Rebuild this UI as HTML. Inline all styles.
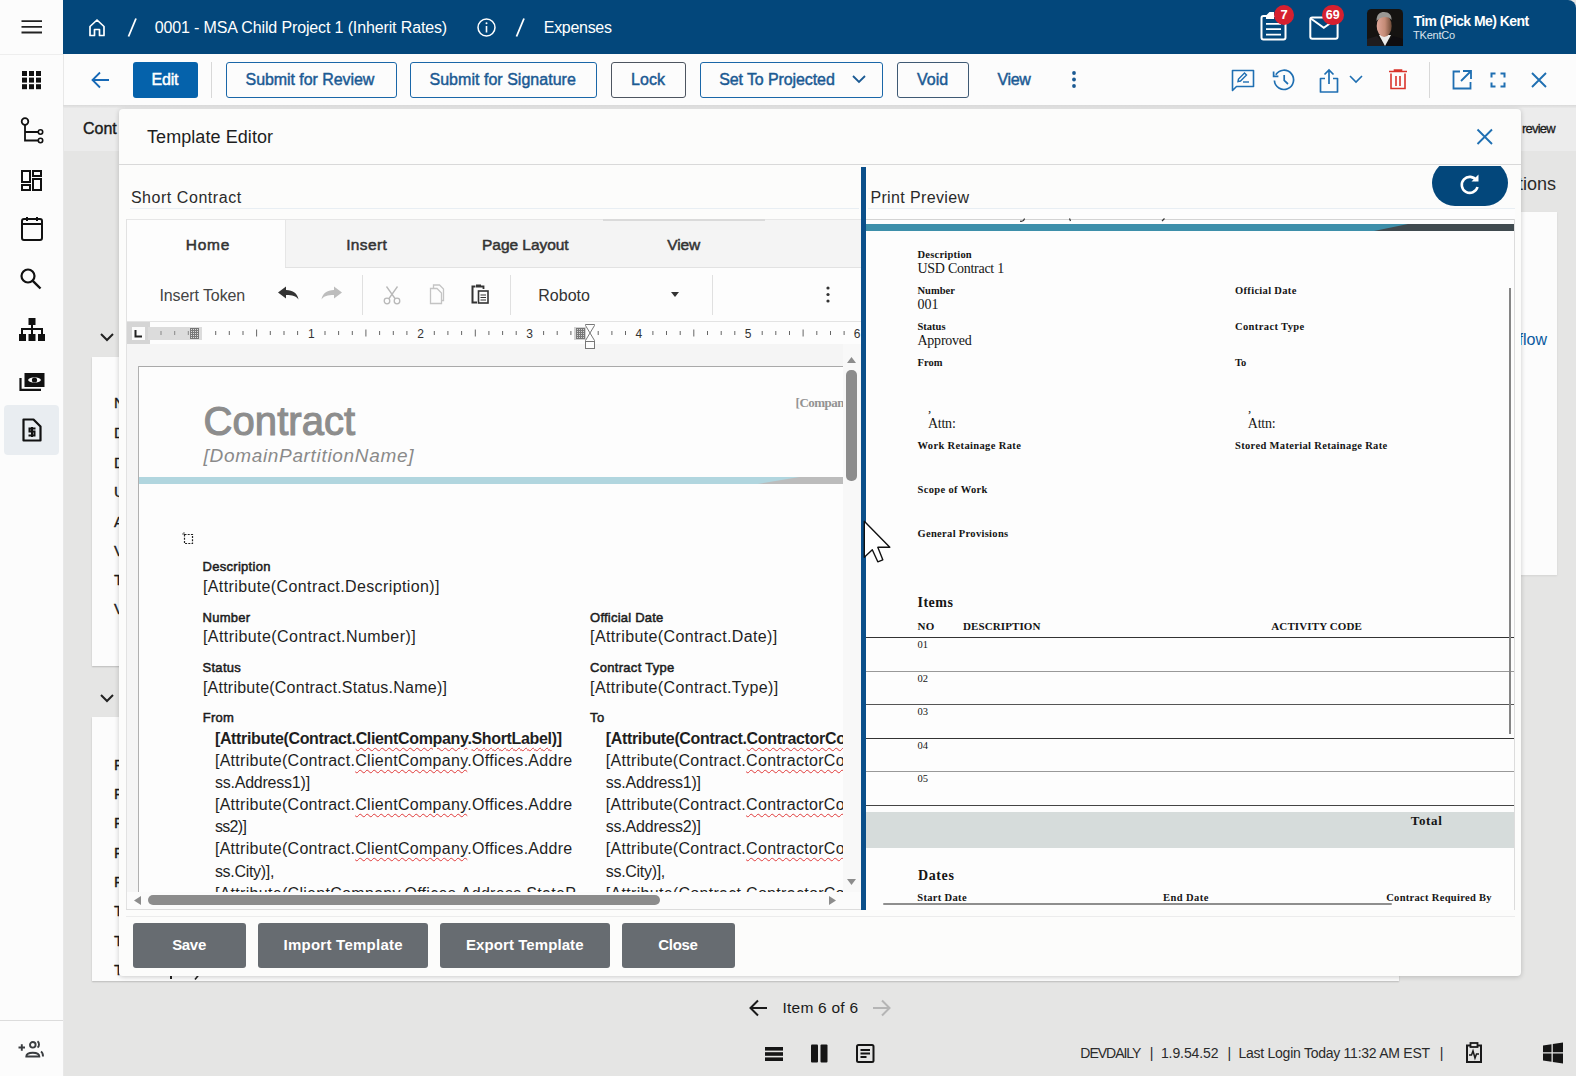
<!DOCTYPE html>
<html><head><meta charset="utf-8"><style>
*{margin:0;padding:0}
html,body{width:1576px;height:1076px;overflow:hidden;background:#e5e5e4;font-family:"Liberation Sans", sans-serif;}
.b{position:absolute}
.i{position:absolute;overflow:visible}
.t{position:absolute;white-space:pre}
.badge{position:absolute;background:#d6202f;color:#fff;border-radius:11px;font:700 13px/20px "Liberation Sans",sans-serif;text-align:center}
.sq{text-decoration:underline wavy #e03a3a;text-decoration-thickness:1px;text-underline-offset:3px}
</style></head><body>
<div class="b" style="left:0px;top:0px;width:63px;height:1076px;background:#fcfcfc;"></div>
<div class="b" style="left:63px;top:0px;width:1px;height:1076px;background:#e8e8e8;"></div>
<div class="b" style="left:0px;top:54px;width:63px;height:1px;background:#eeeeee;"></div>
<div class="b" style="left:0px;top:1020px;width:63px;height:1px;background:#dcdcdc;"></div>
<svg class="i" style="left:19px;top:16px;" width="26" height="20" viewBox="0 0 26 20"><path d="M2.5 5.2H23M2.5 10.8H23M2.5 16.5H23" stroke="#222" stroke-width="1.8"/></svg>
<svg class="i" style="left:0px;top:0px;" width="63" height="100" viewBox="0 0 63 100"><rect x="22" y="71.0" width="5" height="5" fill="#111"/><rect x="22" y="77.6" width="5" height="5" fill="#111"/><rect x="22" y="84.2" width="5" height="5" fill="#111"/><rect x="29" y="71.0" width="5" height="5" fill="#111"/><rect x="29" y="77.6" width="5" height="5" fill="#111"/><rect x="29" y="84.2" width="5" height="5" fill="#111"/><rect x="36" y="71.0" width="5" height="5" fill="#111"/><rect x="36" y="77.6" width="5" height="5" fill="#111"/><rect x="36" y="84.2" width="5" height="5" fill="#111"/></svg>
<svg class="i" style="left:18px;top:116px;" width="28" height="30" viewBox="0 0 28 30"><circle cx="7" cy="5.5" r="3.3" fill="none" stroke="#111" stroke-width="1.8"/><path d="M7 9V24.5H20M7 16H20" fill="none" stroke="#111" stroke-width="1.8"/><circle cx="22.5" cy="16" r="2.2" fill="none" stroke="#111" stroke-width="1.6"/><circle cx="22.5" cy="24.5" r="2.2" fill="none" stroke="#111" stroke-width="1.6"/></svg>
<svg class="i" style="left:18px;top:167px;" width="28" height="26" viewBox="0 0 28 26"><rect x="4" y="4" width="8" height="11" fill="none" stroke="#111" stroke-width="2"/><rect x="15" y="4" width="8" height="5" fill="none" stroke="#111" stroke-width="2"/><rect x="4" y="18" width="8" height="5" fill="none" stroke="#111" stroke-width="2"/><rect x="15" y="12" width="8" height="11" fill="none" stroke="#111" stroke-width="2"/></svg>
<svg class="i" style="left:18px;top:214px;" width="28" height="30" viewBox="0 0 28 30"><rect x="4" y="5" width="20" height="21" rx="2" fill="none" stroke="#111" stroke-width="2"/><path d="M4 10H24M9 3V7M19 3V7" stroke="#111" stroke-width="2"/></svg>
<svg class="i" style="left:18px;top:266px;" width="28" height="28" viewBox="0 0 28 28"><circle cx="10" cy="10" r="6.5" fill="none" stroke="#111" stroke-width="2.2"/><path d="M14.8 14.8L22.5 22.5" stroke="#111" stroke-width="2.4"/></svg>
<svg class="i" style="left:16px;top:316px;" width="32" height="28" viewBox="0 0 32 28"><rect x="12.5" y="2" width="7" height="7" fill="#111"/><path d="M16 9V13M6 18V13H26V18M16 13V18" fill="none" stroke="#111" stroke-width="2"/><rect x="3" y="18" width="7" height="7" fill="#111"/><rect x="12.5" y="18" width="7" height="7" fill="#111"/><rect x="22" y="18" width="7" height="7" fill="#111"/></svg>
<svg class="i" style="left:16px;top:370px;" width="32" height="24" viewBox="0 0 32 24"><rect x="8.5" y="3" width="20" height="14" fill="#111"/><path d="M12 10C13.5 6.3 23.5 6.3 25 10C23.5 13.7 13.5 13.7 12 10Z" fill="#fcfcfc"/><circle cx="18.5" cy="10" r="2.6" fill="#111"/><path d="M4.5 8V19.8H25" fill="none" stroke="#111" stroke-width="2.2"/></svg>
<div class="b" style="left:4px;top:405px;width:55px;height:50px;background:#e9edf1;border-radius:4px;"></div>
<svg class="i" style="left:18px;top:416px;" width="28" height="28" viewBox="0 0 28 28"><path d="M5.5 3.5H15.5L22.5 10.5V24.5H5.5Z" fill="none" stroke="#111" stroke-width="2.2" stroke-linejoin="round"/><path d="M17.5 12.5H11.5V15.5H16.5V19.5H10.5M14 11V21" fill="none" stroke="#111" stroke-width="2"/></svg>
<svg class="i" style="left:16px;top:1038px;" width="32" height="22" viewBox="0 0 32 22"><path d="M2.5 9.5H9M5.8 6.2V12.8" stroke="#3a3d40" stroke-width="1.9"/><circle cx="16.8" cy="6.8" r="2.8" fill="none" stroke="#3a3d40" stroke-width="1.9"/><path d="M10.3 18.5C10.3 13.5 23.3 13.5 23.3 18.5Z" fill="none" stroke="#3a3d40" stroke-width="1.9"/><path d="M21.5 3.2C23.5 4.5 23.5 8.3 21.5 9.5M25 13.5C26.5 14.5 27 16.5 27 18.5" fill="none" stroke="#3a3d40" stroke-width="1.9"/></svg>
<div class="b" style="left:63px;top:0px;width:1513px;height:54px;background:#03477b;border-top-right-radius:8px;"></div>
<svg class="i" style="left:87px;top:17px;" width="20" height="21" viewBox="0 0 20 21"><path d="M3 9.5L10 3L17 9.5V18.5H12.5V12.5H7.5V18.5H3Z" fill="none" stroke="#fff" stroke-width="1.7" stroke-linejoin="round"/></svg>
<svg class="i" style="left:124px;top:16px;" width="16" height="23" viewBox="0 0 16 23"><path d="M12 2.5L4.5 20.5" stroke="#fff" stroke-width="1.8"/></svg>
<div class="t" id="h_bc" style="left:154.70px;top:19.98px;font-size:16px;line-height:16px;color:#fff;letter-spacing:-0.132px;">0001 - MSA Child Project 1 (Inherit Rates)</div>
<svg class="i" style="left:476px;top:17px;" width="21" height="21" viewBox="0 0 21 21"><circle cx="10.5" cy="10.5" r="8.5" fill="none" stroke="#fff" stroke-width="1.5"/><path d="M10.5 9V15.5" stroke="#fff" stroke-width="1.6"/><circle cx="10.5" cy="6.3" r="1" fill="#fff"/></svg>
<svg class="i" style="left:512px;top:16px;" width="16" height="23" viewBox="0 0 16 23"><path d="M12 2.5L4.5 20.5" stroke="#fff" stroke-width="1.8"/></svg>
<div class="t" id="h_exp" style="left:543.80px;top:19.98px;font-size:16px;line-height:16px;color:#fff;letter-spacing:-0.300px;">Expenses</div>
<svg class="i" style="left:1257px;top:8px;" width="34" height="36" viewBox="0 0 34 36"><rect x="4.5" y="8" width="24" height="23.5" rx="2" fill="none" stroke="#fff" stroke-width="2"/><path d="M9 7.5L12.5 4H17V11H9Z" fill="#fff"/><path d="M9 15.8H24M9 21.2H24M9 26.6H24" stroke="#fff" stroke-width="1.7"/></svg>
<div class="badge" style="left:1274px;top:5px;width:20px;height:20px;line-height:20px;">7</div>
<svg class="i" style="left:1306px;top:14px;" width="36" height="28" viewBox="0 0 36 28"><rect x="4.3" y="3.5" width="27.3" height="21.2" rx="2" fill="none" stroke="#fff" stroke-width="2"/><path d="M4.8 4.5L17.8 13.8L30.8 4.5" fill="none" stroke="#fff" stroke-width="2"/></svg>
<div class="badge" style="left:1321.5px;top:4.6px;width:22.5px;height:20px;line-height:20px;font-size:12.5px;">69</div>
<svg class="i" style="left:1367px;top:9px;" width="36" height="37" viewBox="0 0 36 37"><defs><linearGradient id="fg" x1="0" x2="1"><stop offset="0" stop-color="#e0a89a"/><stop offset="0.55" stop-color="#c48b76"/><stop offset="1" stop-color="#6e4a36"/></linearGradient></defs><rect x="0" y="0" width="36" height="37" rx="4.5" fill="#151311"/><path d="M0 30L10 27L18 37H0Z" fill="#1f1c1e"/><path d="M36 30L26 27L18 37H36Z" fill="#0f0d10"/><path d="M12 26L18 37L24 26Z" fill="#ecebea"/><ellipse cx="17.2" cy="17" rx="7.5" ry="11" fill="url(#fg)"/><path d="M9.5 12C9.5 5 13 3 17 3C22 3 25 6 24.5 11C22 7 14 7 9.5 12Z" fill="#9a9894"/></svg>
<div class="t" id="h_name" style="left:1413.40px;top:13.57px;font-size:14px;line-height:14px;color:#fff;font-weight:700;letter-spacing:-0.535px;">Tim (Pick Me) Kent</div>
<div class="t" id="h_co" style="left:1413.00px;top:29.60px;font-size:11px;line-height:11px;color:#d9e3ec;letter-spacing:-0.200px;">TKentCo</div>
<div class="b" style="left:64px;top:54px;width:1512px;height:51px;background:#fcfcfc;"></div>
<div class="b" style="left:63px;top:105px;width:1513px;height:3px;background:linear-gradient(#d9d9d9,#e9e9e9);"></div>
<svg class="i" style="left:88px;top:67px;" width="26" height="26" viewBox="0 0 26 26"><path d="M21 13H5M12 5.5L4.5 13L12 20.5" fill="none" stroke="#1769b6" stroke-width="1.8"/></svg>
<div class="b" style="left:133px;top:62px;width:65px;height:36px;background:#0562ab;border-radius:3px;"></div>
<div class="t" id="tb_edit" style="left:151.40px;top:71.88px;font-size:16px;line-height:16px;color:#fff;letter-spacing:-0.133px;-webkit-text-stroke:0.45px #fff;">Edit</div>
<div class="b" style="left:211px;top:62px;width:1px;height:36px;background:#d8d8d8;"></div>
<div class="b" style="left:226px;top:62px;width:169px;height:34px;border:1px solid #1a67a8;border-radius:3px;background:#fcfcfc;"></div>
<div class="t" id="tb_sfr" style="left:245.60px;top:71.88px;font-size:16px;line-height:16px;color:#1b5a93;letter-spacing:-0.069px;-webkit-text-stroke:0.45px #1b5a93;">Submit for Review</div>
<div class="b" style="left:410px;top:62px;width:185px;height:34px;border:1px solid #1a67a8;border-radius:3px;background:#fcfcfc;"></div>
<div class="t" id="tb_sfs" style="left:429.50px;top:71.88px;font-size:16px;line-height:16px;color:#1b5a93;letter-spacing:0.026px;-webkit-text-stroke:0.45px #1b5a93;">Submit for Signature</div>
<div class="b" style="left:611px;top:62px;width:73px;height:34px;border:1px solid #4d5560;border-radius:3px;background:#fcfcfc;"></div>
<div class="t" id="tb_lock" style="left:631.00px;top:71.88px;font-size:16px;line-height:16px;color:#1b5a93;letter-spacing:0.067px;-webkit-text-stroke:0.45px #1b5a93;">Lock</div>
<div class="b" style="left:700px;top:62px;width:181px;height:34px;border:1px solid #1a67a8;border-radius:3px;background:#fcfcfc;"></div>
<div class="t" id="tb_stp" style="left:719.20px;top:71.88px;font-size:16px;line-height:16px;color:#1b5a93;letter-spacing:-0.100px;-webkit-text-stroke:0.45px #1b5a93;">Set To Projected</div>
<svg class="i" style="left:850px;top:72px;" width="18" height="14" viewBox="0 0 18 14"><path d="M3 4L9 10L15 4" fill="none" stroke="#1b5a93" stroke-width="1.8"/></svg>
<div class="b" style="left:897px;top:62px;width:70px;height:34px;border:1px solid #3f5a74;border-radius:3px;background:#fcfcfc;"></div>
<div class="t" id="tb_void" style="left:917.00px;top:71.88px;font-size:16px;line-height:16px;color:#1b5a93;-webkit-text-stroke:0.45px #1b5a93;">Void</div>
<div class="t" id="tb_view" style="left:997.60px;top:71.88px;font-size:16px;line-height:16px;color:#1b5a93;letter-spacing:-0.400px;-webkit-text-stroke:0.45px #1b5a93;">View</div>
<svg class="i" style="left:1068px;top:70px;" width="12" height="20" viewBox="0 0 12 20"><circle cx="6" cy="3" r="1.9" fill="#1b5a93"/><circle cx="6" cy="9.5" r="1.9" fill="#1b5a93"/><circle cx="6" cy="16" r="1.9" fill="#1b5a93"/></svg>
<svg class="i" style="left:1229px;top:67px;" width="28" height="26" viewBox="0 0 28 26"><path d="M3.5 3.5H24.5V19.5H7.5L3.5 23.5Z" fill="none" stroke="#1f6fb2" stroke-width="1.6" stroke-linejoin="round"/><path d="M9 14.5L9.5 12L15.5 6L17.5 8L11.5 14Z" fill="none" stroke="#1f6fb2" stroke-width="1.4"/><path d="M14 15H20" stroke="#1f6fb2" stroke-width="1.4"/></svg>
<svg class="i" style="left:1270px;top:66px;" width="28" height="28" viewBox="0 0 28 28"><path d="M5.8 8.8A9.6 9.6 0 1 1 4.4 14.5" fill="none" stroke="#1f6fb2" stroke-width="1.7"/><path d="M3.6 5.5V10.3H8.4" fill="none" stroke="#1f6fb2" stroke-width="1.7"/><path d="M14.2 9V14.5L18 18" fill="none" stroke="#1f6fb2" stroke-width="1.7"/></svg>
<svg class="i" style="left:1316px;top:66px;" width="26" height="30" viewBox="0 0 26 30"><path d="M9 12.5H4.5V26H21.5V12.5H17" fill="none" stroke="#1f6fb2" stroke-width="1.7" stroke-linejoin="round"/><path d="M13 18V4.5M8.5 8.5L13 4L17.5 8.5" fill="none" stroke="#1f6fb2" stroke-width="1.7"/></svg>
<svg class="i" style="left:1347px;top:72px;" width="18" height="14" viewBox="0 0 18 14"><path d="M3 4L9 10L15 4" fill="none" stroke="#1f6fb2" stroke-width="1.6"/></svg>
<svg class="i" style="left:1386px;top:67px;" width="24" height="26" viewBox="0 0 24 26"><path d="M3 4.5H21M8.5 4.5V3H15.5V4.5M5 6.5V21.5H19V6.5" fill="none" stroke="#d9342b" stroke-width="1.6"/><path d="M10 9V19M14 9V19" stroke="#d9342b" stroke-width="1.6"/></svg>
<div class="b" style="left:1429px;top:62px;width:1px;height:36px;background:#d8d8d8;"></div>
<svg class="i" style="left:1449px;top:67px;" width="26" height="26" viewBox="0 0 26 26"><path d="M11 4.5H4.5V21.5H21.5V15" fill="none" stroke="#1f6fb2" stroke-width="1.8"/><path d="M14 4H22V12M22 4L12 14" fill="none" stroke="#1f6fb2" stroke-width="1.8"/></svg>
<svg class="i" style="left:1488px;top:70px;" width="20" height="20" viewBox="0 0 20 20"><path d="M3.5 7.5V3.5H7.5M12.5 3.5H16.5V7.5M16.5 12.5V16.5H12.5M7.5 16.5H3.5V12.5" fill="none" stroke="#1f6fb2" stroke-width="2"/></svg>
<svg class="i" style="left:1528px;top:69px;" width="22" height="22" viewBox="0 0 22 22"><path d="M4 4L18 18M18 4L4 18" stroke="#1f6fb2" stroke-width="1.9"/></svg>
<div class="b" style="left:64px;top:108px;width:1512px;height:43px;background:#ececec;"></div>
<div class="t" id="bg_cont" style="left:83.00px;top:121.38px;font-size:16px;line-height:16px;color:#1a1a1a;-webkit-text-stroke:0.4px #1a1a1a;">Cont</div>
<div class="t" id="bg_review" style="left:1522.00px;top:122.11px;font-size:13px;line-height:13px;color:#1a1a1a;letter-spacing:-0.800px;-webkit-text-stroke:0.3px #1a1a1a;">review</div>
<div class="t" id="bg_tions" style="left:1556.00px;top:175.19px;font-size:18px;line-height:18px;color:#2a2a2a;transform:translateX(-100%);">Actions</div>
<div class="b" style="left:1500px;top:212px;width:57px;height:363px;background:#fcfcfc;box-shadow:0 1px 2px rgba(0,0,0,0.08);"></div>
<div class="t" id="bg_flow" style="left:1547.00px;top:331.68px;font-size:16px;line-height:16px;color:#0b5aa0;transform:translateX(-100%);">Workflow</div>
<svg class="i" style="left:98px;top:330px;" width="18" height="14" viewBox="0 0 18 14"><path d="M3 4L9 10L15 4" fill="none" stroke="#222" stroke-width="2"/></svg>
<svg class="i" style="left:98px;top:691px;" width="18" height="14" viewBox="0 0 18 14"><path d="M3 4L9 10L15 4" fill="none" stroke="#222" stroke-width="2"/></svg>
<div class="b" style="left:92px;top:357px;width:1307px;height:309px;background:#fcfcfc;box-shadow:0 1px 1.5px rgba(0,0,0,0.18);"></div>
<div class="b" style="left:92px;top:717px;width:1307px;height:264px;background:#fcfcfc;box-shadow:0 1px 1.5px rgba(0,0,0,0.18);"></div>
<div class="b" style="left:170px;top:975px;width:1.6px;height:4px;background:#222;"></div>
<svg class="i" style="left:193px;top:974px;" width="8" height="6" viewBox="0 0 8 6"><path d="M6 0.5L2 5.5" stroke="#222" stroke-width="1.6"/></svg>
<div class="t" id="bg_l0" style="left:114.00px;top:395.23px;font-size:15px;line-height:15px;color:#1a1a1a;-webkit-text-stroke:0.35px #1a1a1a;">N</div>
<div class="t" id="bg_l1" style="left:114.00px;top:425.23px;font-size:15px;line-height:15px;color:#1a1a1a;-webkit-text-stroke:0.35px #1a1a1a;">D</div>
<div class="t" id="bg_l2" style="left:114.00px;top:455.23px;font-size:15px;line-height:15px;color:#1a1a1a;-webkit-text-stroke:0.35px #1a1a1a;">D</div>
<div class="t" id="bg_l3" style="left:114.00px;top:484.23px;font-size:15px;line-height:15px;color:#1a1a1a;-webkit-text-stroke:0.35px #1a1a1a;">U</div>
<div class="t" id="bg_l4" style="left:114.00px;top:514.23px;font-size:15px;line-height:15px;color:#1a1a1a;-webkit-text-stroke:0.35px #1a1a1a;">A</div>
<div class="t" id="bg_l5" style="left:114.00px;top:543.23px;font-size:15px;line-height:15px;color:#1a1a1a;-webkit-text-stroke:0.35px #1a1a1a;">V</div>
<div class="t" id="bg_l6" style="left:114.00px;top:572.23px;font-size:15px;line-height:15px;color:#1a1a1a;-webkit-text-stroke:0.35px #1a1a1a;">T</div>
<div class="t" id="bg_l7" style="left:114.00px;top:601.23px;font-size:15px;line-height:15px;color:#1a1a1a;-webkit-text-stroke:0.35px #1a1a1a;">V</div>
<div class="t" id="bg_m0" style="left:114.00px;top:756.73px;font-size:15px;line-height:15px;color:#1a1a1a;-webkit-text-stroke:0.35px #1a1a1a;">F</div>
<div class="t" id="bg_m1" style="left:114.00px;top:785.93px;font-size:15px;line-height:15px;color:#1a1a1a;-webkit-text-stroke:0.35px #1a1a1a;">F</div>
<div class="t" id="bg_m2" style="left:114.00px;top:815.23px;font-size:15px;line-height:15px;color:#1a1a1a;-webkit-text-stroke:0.35px #1a1a1a;">F</div>
<div class="t" id="bg_m3" style="left:114.00px;top:845.23px;font-size:15px;line-height:15px;color:#1a1a1a;-webkit-text-stroke:0.35px #1a1a1a;">F</div>
<div class="t" id="bg_m4" style="left:114.00px;top:874.23px;font-size:15px;line-height:15px;color:#1a1a1a;-webkit-text-stroke:0.35px #1a1a1a;">F</div>
<div class="t" id="bg_m5" style="left:114.00px;top:903.23px;font-size:15px;line-height:15px;color:#1a1a1a;-webkit-text-stroke:0.35px #1a1a1a;">T</div>
<div class="t" id="bg_m6" style="left:114.00px;top:933.23px;font-size:15px;line-height:15px;color:#1a1a1a;-webkit-text-stroke:0.35px #1a1a1a;">T</div>
<div class="t" id="bg_m7" style="left:114.00px;top:962.23px;font-size:15px;line-height:15px;color:#1a1a1a;-webkit-text-stroke:0.35px #1a1a1a;">T</div>
<svg class="i" style="left:747px;top:997px;" width="24" height="22" viewBox="0 0 24 22"><path d="M20 11H4M11 3.5L3.5 11L11 18.5" fill="none" stroke="#1a1a1a" stroke-width="2"/></svg>
<div class="t" id="pg_item" style="left:782.50px;top:999.70px;font-size:15.5px;line-height:15.5px;color:#1a1a1a;letter-spacing:0.230px;">Item 6 of 6</div>
<svg class="i" style="left:870px;top:997px;" width="24" height="22" viewBox="0 0 24 22"><path d="M3 11H19M12 3.5L19.5 11L12 18.5" fill="none" stroke="#b5b5b5" stroke-width="2"/></svg>
<svg class="i" style="left:762px;top:1044px;" width="24" height="20" viewBox="0 0 24 20"><rect x="3" y="3" width="18" height="3.6" fill="#151515"/><rect x="3" y="8.2" width="18" height="3.6" fill="#151515"/><rect x="3" y="13.4" width="18" height="3.6" fill="#151515"/></svg>
<svg class="i" style="left:808px;top:1042px;" width="24" height="22" viewBox="0 0 24 22"><rect x="3" y="2.5" width="7" height="18" rx="1" fill="#151515"/><rect x="12.5" y="2.5" width="7" height="18" rx="1" fill="#151515"/></svg>
<svg class="i" style="left:853px;top:1042px;" width="24" height="22" viewBox="0 0 24 22"><rect x="4" y="3" width="16.5" height="17" rx="1.5" fill="none" stroke="#151515" stroke-width="2"/><path d="M7.5 8H17M7.5 11.5H17M7.5 15H13.5" stroke="#151515" stroke-width="1.8"/></svg>
<div class="t" id="st_dev" style="left:1080.30px;top:1046.37px;font-size:14px;line-height:14px;color:#2a2a2a;letter-spacing:-1.014px;">DEVDAILY</div>
<div class="t" id="st_p1" style="left:1149.70px;top:1046.37px;font-size:14px;line-height:14px;color:#2a2a2a;">|</div>
<div class="t" id="st_ver" style="left:1160.90px;top:1046.37px;font-size:14px;line-height:14px;color:#2a2a2a;letter-spacing:-0.088px;">1.9.54.52</div>
<div class="t" id="st_p2" style="left:1227.60px;top:1046.37px;font-size:14px;line-height:14px;color:#2a2a2a;">|</div>
<div class="t" id="st_login" style="left:1238.50px;top:1046.37px;font-size:14px;line-height:14px;color:#2a2a2a;letter-spacing:-0.257px;">Last Login Today 11:32 AM EST</div>
<div class="t" id="st_p3" style="left:1439.80px;top:1046.37px;font-size:14px;line-height:14px;color:#2a2a2a;">|</div>
<svg class="i" style="left:1462px;top:1040px;" width="24" height="24" viewBox="0 0 24 24"><path d="M8 5.5H5V22H19V5.5H16" fill="none" stroke="#1a1a1a" stroke-width="2"/><rect x="8.5" y="3" width="7" height="4" fill="none" stroke="#1a1a1a" stroke-width="1.8"/><path d="M7 15H9.5L11 11L13 18L14.5 14H17" fill="none" stroke="#1a1a1a" stroke-width="1.5"/></svg>
<svg class="i" style="left:1540px;top:1040px;" width="26" height="26" viewBox="0 0 26 26"><path d="M3 5.5L11.5 4.3V12.3H3ZM12.8 4.1L23 2.6V12.3H12.8ZM3 13.6H11.5V21.7L3 20.5ZM12.8 13.6H23V23.4L12.8 21.9Z" fill="#151515"/></svg>
<div class="b" style="left:119px;top:109px;width:1402px;height:867px;background:#fcfcfb;border-radius:4px;box-shadow:0 1px 5px rgba(0,0,0,0.2);z-index:5;"></div>
<div class="t" id="m_title" style="left:147.00px;top:128.19px;font-size:18px;line-height:18px;color:#1e1e1e;letter-spacing:0.071px;z-index:6;">Template Editor</div>
<svg class="i" style="left:1473px;top:125px;z-index:6;" width="24" height="24" viewBox="0 0 24 24"><path d="M4.5 4.5L19 19M19 4.5L4.5 19" stroke="#1f6fb2" stroke-width="1.9"/></svg>
<div class="b" style="left:119px;top:164px;width:1402px;height:1px;background:#d9d9d9;z-index:6;"></div>
<div class="t" id="m_short" style="left:130.90px;top:189.78px;font-size:16px;line-height:16px;color:#2a2a2a;letter-spacing:0.546px;z-index:6;">Short Contract</div>
<div class="b" style="left:130px;top:208px;width:729px;height:1px;background:#e8eef3;z-index:6;"></div>
<div class="t" id="m_pp" style="left:870.40px;top:189.88px;font-size:16px;line-height:16px;color:#2a2a2a;letter-spacing:0.367px;z-index:6;">Print Preview</div>
<div class="b" style="left:868px;top:208px;width:647px;height:1px;background:#e8eef3;z-index:6;"></div>
<div class="b" style="left:1432px;top:166px;width:76px;height:40px;overflow:hidden;z-index:6;"><div class="b" style="left:0;top:-6px;width:76px;height:46px;border-radius:23px;background:#03477b;"></div></div>
<svg class="i" style="left:1457px;top:171px;z-index:6;" width="26" height="26" viewBox="0 0 26 26"><path d="M19.5 9.5A8 8 0 1 0 20.5 16" fill="none" stroke="#fff" stroke-width="2.6"/><path d="M14.5 10.5H21.5V3.5Z" fill="#fff"/></svg>
<div class="b" style="left:861px;top:167px;width:5px;height:743px;background:#0b4f8a;z-index:6;"></div>
<div class="b" style="left:126px;top:219px;width:735px;height:690px;background:#fdfdfd;border-left:1px solid #e2e2e2;border-bottom:1px solid #dedede;box-sizing:border-box;z-index:6;"></div>
<div class="b" style="left:285px;top:219px;width:576px;height:49px;background:#f4f4f4;border-left:1px solid #e6e6e6;box-sizing:border-box;z-index:6;"></div>
<div class="b" style="left:127px;top:219px;width:734px;height:1px;background:#e6e6e6;z-index:6;"></div>
<div class="b" style="left:603px;top:219px;width:162px;height:2px;background:#dadada;z-index:6;"></div>
<div class="b" style="left:285px;top:267px;width:576px;height:1px;background:#e2e2e2;z-index:6;"></div>
<div class="t" id="tab_home" style="left:185.70px;top:237.10px;font-size:15.5px;line-height:15.5px;color:#333;letter-spacing:0.800px;-webkit-text-stroke:0.5px #333;z-index:6;">Home</div>
<div class="t" id="tab_ins" style="left:346.20px;top:237.10px;font-size:15.5px;line-height:15.5px;color:#333;letter-spacing:0.380px;-webkit-text-stroke:0.5px #333;z-index:6;">Insert</div>
<div class="t" id="tab_pl" style="left:482.00px;top:237.00px;font-size:15.5px;line-height:15.5px;color:#333;letter-spacing:-0.040px;-webkit-text-stroke:0.5px #333;z-index:6;">Page Layout</div>
<div class="t" id="tab_view" style="left:667.30px;top:237.00px;font-size:15.5px;line-height:15.5px;color:#333;letter-spacing:-0.100px;-webkit-text-stroke:0.5px #333;z-index:6;">View</div>
<div class="t" id="tb2_it" style="left:159.40px;top:288.08px;font-size:16px;line-height:16px;color:#444;letter-spacing:-0.091px;z-index:6;">Insert Token</div>
<svg class="i" style="left:276px;top:284px;z-index:6;" width="26" height="18" viewBox="0 0 26 18"><path d="M2 8.5L10 2.5V6C17 6 21.5 9.5 22.5 15.5C20 12 16.5 11 10 11V14.5Z" fill="#333"/></svg>
<svg class="i" style="left:318px;top:284px;z-index:6;" width="26" height="18" viewBox="0 0 26 18"><path d="M24 8.5L16 2.5V6C9 6 4.5 9.5 3.5 15.5C6 12 9.5 11 16 11V14.5Z" fill="#bdbdbd"/></svg>
<div class="b" style="left:362px;top:275px;width:1px;height:40px;background:#e0e0e0;z-index:6;"></div>
<svg class="i" style="left:381px;top:284px;z-index:6;" width="22" height="22" viewBox="0 0 22 22"><path d="M5.5 2.5L14 14.5M16.5 2.5L8 14.5" stroke="#b8b8b8" stroke-width="1.3"/><circle cx="6" cy="17" r="2.8" fill="none" stroke="#b8b8b8" stroke-width="1.3"/><circle cx="16" cy="17" r="2.8" fill="none" stroke="#b8b8b8" stroke-width="1.3"/></svg>
<svg class="i" style="left:424px;top:283px;z-index:6;" width="22" height="22" viewBox="0 0 22 22"><path d="M6.5 5.5H13L17.5 10V20.5H6.5Z" fill="none" stroke="#c4c4c4" stroke-width="1.3"/><path d="M9.5 5.5V2H15.5L19.5 6V17.5H17.5" fill="none" stroke="#c4c4c4" stroke-width="1.3"/></svg>
<svg class="i" style="left:469px;top:282px;z-index:6;" width="22" height="23" viewBox="0 0 22 23"><path d="M6.5 4.5H3.5V20.5H8" fill="none" stroke="#333" stroke-width="2"/><path d="M12 4.5H14.5V7" fill="none" stroke="#333" stroke-width="1.8"/><rect x="7" y="2.5" width="5" height="3" fill="#333"/><rect x="9.5" y="9" width="9.5" height="12" fill="none" stroke="#333" stroke-width="1.6"/><path d="M11.5 13H17M11.5 15.5H17M11.5 18H17" stroke="#333" stroke-width="1.2"/></svg>
<div class="b" style="left:510px;top:275px;width:1px;height:40px;background:#e0e0e0;z-index:6;"></div>
<div class="t" id="tb2_rob" style="left:538.20px;top:288.18px;font-size:16px;line-height:16px;color:#333;letter-spacing:0.040px;z-index:6;">Roboto</div>
<svg class="i" style="left:668px;top:289px;z-index:6;" width="14" height="10" viewBox="0 0 14 10"><path d="M3 3H11L7 8Z" fill="#333"/></svg>
<div class="b" style="left:712px;top:275px;width:1px;height:40px;background:#e0e0e0;z-index:6;"></div>
<svg class="i" style="left:822px;top:285px;z-index:6;" width="12" height="20" viewBox="0 0 12 20"><circle cx="6" cy="3" r="1.6" fill="#333"/><circle cx="6" cy="9.5" r="1.6" fill="#333"/><circle cx="6" cy="16" r="1.6" fill="#333"/></svg>
<div class="b" style="left:127px;top:321px;width:734px;height:1px;background:#e3e3e3;z-index:6;"></div>
<div class="b" style="left:127px;top:322px;width:23px;height:22px;background:#d5d5d5;z-index:6;"></div>
<div class="b" style="left:132px;top:326.5px;width:13px;height:13px;background:#fbfbfb;z-index:6;"></div>
<svg class="i" style="left:132px;top:326px;z-index:6;" width="13" height="14" viewBox="0 0 13 14"><path d="M3.5 4V10.5H10" fill="none" stroke="#222" stroke-width="2"/></svg>
<div class="b" style="left:148px;top:326.5px;width:54px;height:13px;background:#dcdcdc;z-index:6;"></div>
<div class="b" style="left:574px;top:326.5px;width:12px;height:13px;background:#d2d2d2;z-index:6;"></div>
<svg class="i" style="left:127px;top:322px;z-index:6;" width="734" height="22" viewBox="0 0 734 22"><rect x="88.2" y="9.0" width="1" height="4" fill="#666"/><rect x="101.8" y="9.0" width="1" height="4" fill="#666"/><rect x="115.5" y="9.0" width="1" height="4" fill="#666"/><rect x="129.1" y="7.5" width="1" height="7" fill="#666"/><rect x="142.8" y="9.0" width="1" height="4" fill="#666"/><rect x="156.5" y="9.0" width="1" height="4" fill="#666"/><rect x="170.1" y="9.0" width="1" height="4" fill="#666"/><rect x="197.5" y="9.0" width="1" height="4" fill="#666"/><rect x="211.1" y="9.0" width="1" height="4" fill="#666"/><rect x="224.8" y="9.0" width="1" height="4" fill="#666"/><rect x="238.4" y="7.5" width="1" height="7" fill="#666"/><rect x="252.1" y="9.0" width="1" height="4" fill="#666"/><rect x="265.8" y="9.0" width="1" height="4" fill="#666"/><rect x="279.4" y="9.0" width="1" height="4" fill="#666"/><rect x="306.8" y="9.0" width="1" height="4" fill="#666"/><rect x="320.4" y="9.0" width="1" height="4" fill="#666"/><rect x="334.1" y="9.0" width="1" height="4" fill="#666"/><rect x="347.8" y="7.5" width="1" height="7" fill="#666"/><rect x="361.4" y="9.0" width="1" height="4" fill="#666"/><rect x="375.1" y="9.0" width="1" height="4" fill="#666"/><rect x="388.7" y="9.0" width="1" height="4" fill="#666"/><rect x="416.1" y="9.0" width="1" height="4" fill="#666"/><rect x="429.7" y="9.0" width="1" height="4" fill="#666"/><rect x="443.4" y="9.0" width="1" height="4" fill="#666"/><rect x="457.0" y="7.5" width="1" height="7" fill="#666"/><rect x="470.7" y="9.0" width="1" height="4" fill="#666"/><rect x="484.4" y="9.0" width="1" height="4" fill="#666"/><rect x="498.0" y="9.0" width="1" height="4" fill="#666"/><rect x="525.4" y="9.0" width="1" height="4" fill="#666"/><rect x="539.0" y="9.0" width="1" height="4" fill="#666"/><rect x="552.7" y="9.0" width="1" height="4" fill="#666"/><rect x="566.3" y="7.5" width="1" height="7" fill="#666"/><rect x="580.0" y="9.0" width="1" height="4" fill="#666"/><rect x="593.7" y="9.0" width="1" height="4" fill="#666"/><rect x="607.3" y="9.0" width="1" height="4" fill="#666"/><rect x="634.7" y="9.0" width="1" height="4" fill="#666"/><rect x="648.3" y="9.0" width="1" height="4" fill="#666"/><rect x="662.0" y="9.0" width="1" height="4" fill="#666"/><rect x="675.6" y="7.5" width="1" height="7" fill="#666"/><rect x="689.3" y="9.0" width="1" height="4" fill="#666"/><rect x="703.0" y="9.0" width="1" height="4" fill="#666"/><rect x="716.6" y="9.0" width="1" height="4" fill="#666"/><rect x="33.5" y="9.0" width="1" height="4" fill="#888"/><rect x="47.2" y="9.0" width="1" height="4" fill="#888"/><rect x="60.8" y="9.0" width="1" height="4" fill="#888"/></svg>
<svg class="i" style="left:186px;top:326px;z-index:6;" width="16" height="14" viewBox="0 0 16 14"><rect x="4" y="2" width="1" height="10" fill="#777"/><rect x="6" y="2" width="1" height="10" fill="#777"/><rect x="8" y="2" width="1" height="10" fill="#777"/><rect x="10" y="2" width="1" height="10" fill="#777"/><rect x="12" y="2" width="1" height="10" fill="#777"/><rect x="4" y="2" width="9" height="1" fill="#777"/><rect x="4" y="4" width="9" height="1" fill="#777"/><rect x="4" y="6" width="9" height="1" fill="#777"/><rect x="4" y="8" width="9" height="1" fill="#777"/><rect x="4" y="10" width="9" height="1" fill="#777"/><rect x="4" y="12" width="9" height="1" fill="#777"/></svg>
<svg class="i" style="left:574px;top:326px;z-index:6;" width="14" height="14" viewBox="0 0 14 14"><rect x="2" y="2" width="1" height="10" fill="#777"/><rect x="4" y="2" width="1" height="10" fill="#777"/><rect x="6" y="2" width="1" height="10" fill="#777"/><rect x="8" y="2" width="1" height="10" fill="#777"/><rect x="10" y="2" width="1" height="10" fill="#777"/><rect x="2" y="2" width="9" height="1" fill="#777"/><rect x="2" y="4" width="9" height="1" fill="#777"/><rect x="2" y="6" width="9" height="1" fill="#777"/><rect x="2" y="8" width="9" height="1" fill="#777"/><rect x="2" y="10" width="9" height="1" fill="#777"/><rect x="2" y="12" width="9" height="1" fill="#777"/></svg>
<svg class="i" style="left:582px;top:323px;z-index:8;" width="16" height="28" viewBox="0 0 16 28"><path d="M3.5 1.5H12.5V2.5L8 10L3.5 2.5Z M3.5 18.5H12.5V17.5L8 10L3.5 17.5Z" fill="#fdfdfd" stroke="#777" stroke-width="1"/><rect x="3.5" y="18.5" width="9" height="7" fill="#fdfdfd" stroke="#777" stroke-width="1"/></svg>
<div class="t" id="ru_1" style="left:308.00px;top:328.46px;font-size:12px;line-height:12px;color:#333;z-index:6;">1</div>
<div class="t" id="ru_2" style="left:417.20px;top:328.46px;font-size:12px;line-height:12px;color:#333;z-index:6;">2</div>
<div class="t" id="ru_3" style="left:526.20px;top:328.46px;font-size:12px;line-height:12px;color:#333;z-index:6;">3</div>
<div class="t" id="ru_4" style="left:635.40px;top:328.46px;font-size:12px;line-height:12px;color:#333;z-index:6;">4</div>
<div class="t" id="ru_5" style="left:744.70px;top:328.46px;font-size:12px;line-height:12px;color:#333;z-index:6;">5</div>
<div class="t" id="ru_6" style="left:853.70px;top:328.46px;font-size:12px;line-height:12px;color:#333;z-index:6;">6</div>
<div class="b" style="left:127px;top:344px;width:716px;height:548px;background:#f5f5f5;z-index:6;"></div>
<div class="b" style="left:843px;top:344px;width:18px;height:548px;background:#f8f8f8;z-index:6;"></div>
<div class="b" style="left:127px;top:892px;width:734px;height:17px;background:#fbfbfb;z-index:6;"></div>
<div class="b" style="left:126px;top:908.5px;width:735px;height:1px;background:#dcdcdc;z-index:6;"></div>
<div class="b" style="left:138px;top:366px;width:705px;height:525.7px;overflow:hidden;background:#fdfdfd;z-index:6;">
<div class="b" style="left:0px;top:0px;width:705px;height:1px;background:#a9a9a9;"></div>
<div class="b" style="left:0px;top:0px;width:1px;height:530px;background:#b0b0b0;"></div>
<div class="t" id="d_compan" style="left:657.60px;top:30.21px;font-size:13px;line-height:13px;color:#939393;font-weight:700;font-family:'Liberation Serif', serif;letter-spacing:-0.517px;">[Compan</div>
<div class="t" id="d_contract" style="left:65.60px;top:34.60px;font-size:40px;line-height:40px;color:#8d8d8d;letter-spacing:0.057px;-webkit-text-stroke:1.1px #8d8d8d;">Contract</div>
<div class="t" id="d_dpn" style="left:65.60px;top:80.24px;font-size:19px;line-height:19px;color:#8a8a8a;letter-spacing:0.670px;font-style:italic;">[DomainPartitionName]</div>
<svg class="i" style="left:1px;top:111px;" width="704" height="7" viewBox="0 0 704 7"><rect x="0" y="0" width="704" height="7" fill="#b1d6df"/><path d="M618.8 7L660.5 0H704V7Z" fill="#bcbcbc"/></svg>
<svg class="i" style="left:44px;top:166px;" width="12" height="13" viewBox="0 0 12 13"><path d="M1 3V1H3" fill="none" stroke="#666" stroke-width="1"/><rect x="2.5" y="2.5" width="8" height="9" fill="none" stroke="#222" stroke-width="1.2" stroke-dasharray="2 1.2"/></svg>
<div class="t" id="d_l_desc" style="left:64.50px;top:193.91px;font-size:13px;line-height:13px;color:#1c1c1c;letter-spacing:0.290px;-webkit-text-stroke:0.5px #1c1c1c;">Description</div>
<div class="t" id="d_v_desc" style="left:64.90px;top:212.68px;font-size:16px;line-height:16px;color:#1f1f1f;letter-spacing:0.391px;white-space:nowrap;">[Attribute(Contract.Description)]</div>
<div class="t" id="d_l_num" style="left:64.50px;top:244.51px;font-size:13px;line-height:13px;color:#1c1c1c;letter-spacing:0.290px;-webkit-text-stroke:0.5px #1c1c1c;">Number</div>
<div class="t" id="d_v_num" style="left:64.90px;top:263.28px;font-size:16px;line-height:16px;color:#1f1f1f;letter-spacing:0.437px;white-space:nowrap;">[Attribute(Contract.Number)]</div>
<div class="t" id="d_l_stat" style="left:64.50px;top:295.12px;font-size:13px;line-height:13px;color:#1c1c1c;letter-spacing:0.290px;-webkit-text-stroke:0.5px #1c1c1c;">Status</div>
<div class="t" id="d_v_stat" style="left:64.90px;top:313.78px;font-size:16px;line-height:16px;color:#1f1f1f;letter-spacing:0.234px;white-space:nowrap;">[Attribute(Contract.Status.Name)]</div>
<div class="t" id="d_l_from" style="left:64.70px;top:345.22px;font-size:13px;line-height:13px;color:#1c1c1c;letter-spacing:0.290px;-webkit-text-stroke:0.5px #1c1c1c;">From</div>
<div class="t" id="d_l_od" style="left:452.10px;top:244.51px;font-size:13px;line-height:13px;color:#1c1c1c;letter-spacing:0.217px;-webkit-text-stroke:0.5px #1c1c1c;">Official Date</div>
<div class="t" id="d_v_od" style="left:452.10px;top:263.28px;font-size:16px;line-height:16px;color:#1f1f1f;letter-spacing:0.372px;white-space:nowrap;">[Attribute(Contract.Date)]</div>
<div class="t" id="d_l_ct" style="left:452.10px;top:295.12px;font-size:13px;line-height:13px;color:#1c1c1c;letter-spacing:0.290px;-webkit-text-stroke:0.5px #1c1c1c;">Contract Type</div>
<div class="t" id="d_v_ct" style="left:452.10px;top:313.78px;font-size:16px;line-height:16px;color:#1f1f1f;letter-spacing:0.372px;white-space:nowrap;">[Attribute(Contract.Type)]</div>
<div class="t" id="d_l_to" style="left:452.10px;top:345.22px;font-size:13px;line-height:13px;color:#1c1c1c;letter-spacing:0.290px;-webkit-text-stroke:0.5px #1c1c1c;">To</div>
<div class="t" id="d_f0" style="left:76.90px;top:364.68px;font-size:16px;line-height:16px;color:#1f1f1f;font-weight:700;letter-spacing:-0.340px;white-space:nowrap;">[Attribute(Contract.<span class="sq">ClientCompany</span>.<span class="sq">ShortLabel</span>)]</div>
<div class="t" id="d_f1" style="left:76.90px;top:387.08px;font-size:16px;line-height:16px;color:#1f1f1f;letter-spacing:0.300px;white-space:nowrap;">[Attribute(Contract.<span class="sq">ClientCompany</span>.Offices.Addre</div>
<div class="t" id="d_f2" style="left:76.90px;top:408.68px;font-size:16px;line-height:16px;color:#1f1f1f;letter-spacing:-0.217px;white-space:nowrap;">ss.Address1)]</div>
<div class="t" id="d_f3" style="left:76.90px;top:430.88px;font-size:16px;line-height:16px;color:#1f1f1f;letter-spacing:0.300px;white-space:nowrap;">[Attribute(Contract.<span class="sq">ClientCompany</span>.Offices.Addre</div>
<div class="t" id="d_f4" style="left:76.90px;top:453.18px;font-size:16px;line-height:16px;color:#1f1f1f;letter-spacing:-0.650px;white-space:nowrap;">ss2)]</div>
<div class="t" id="d_f5" style="left:76.90px;top:475.38px;font-size:16px;line-height:16px;color:#1f1f1f;letter-spacing:0.300px;white-space:nowrap;">[Attribute(Contract.<span class="sq">ClientCompany</span>.Offices.Addre</div>
<div class="t" id="d_f6" style="left:76.90px;top:497.58px;font-size:16px;line-height:16px;color:#1f1f1f;letter-spacing:-0.300px;white-space:nowrap;">ss.City)],</div>
<div class="t" id="d_f7" style="left:76.90px;top:520.08px;font-size:16px;line-height:16px;color:#1f1f1f;letter-spacing:0.300px;white-space:nowrap;">[Attribute(ClientCompany.Offices.Address.StateP</div>
<div class="t" id="d_t0" style="left:467.80px;top:364.68px;font-size:16px;line-height:16px;color:#1f1f1f;font-weight:700;letter-spacing:-0.340px;white-space:nowrap;">[Attribute(Contract.<span class="sq">ContractorCompany</span>.ShortLabel)]</div>
<div class="t" id="d_t1" style="left:467.80px;top:387.08px;font-size:16px;line-height:16px;color:#1f1f1f;letter-spacing:0.300px;white-space:nowrap;">[Attribute(Contract.<span class="sq">ContractorCompany</span>.Offices.Addre</div>
<div class="t" id="d_t2" style="left:467.80px;top:408.68px;font-size:16px;line-height:16px;color:#1f1f1f;letter-spacing:-0.217px;white-space:nowrap;">ss.Address1)]</div>
<div class="t" id="d_t3" style="left:467.80px;top:430.88px;font-size:16px;line-height:16px;color:#1f1f1f;letter-spacing:0.300px;white-space:nowrap;">[Attribute(Contract.<span class="sq">ContractorCompany</span>.Offices.Addre</div>
<div class="t" id="d_t4" style="left:467.80px;top:453.18px;font-size:16px;line-height:16px;color:#1f1f1f;letter-spacing:-0.217px;white-space:nowrap;">ss.Address2)]</div>
<div class="t" id="d_t5" style="left:467.80px;top:475.38px;font-size:16px;line-height:16px;color:#1f1f1f;letter-spacing:0.300px;white-space:nowrap;">[Attribute(Contract.<span class="sq">ContractorCompany</span>.Offices.Addre</div>
<div class="t" id="d_t6" style="left:467.80px;top:497.58px;font-size:16px;line-height:16px;color:#1f1f1f;letter-spacing:-0.300px;white-space:nowrap;">ss.City)],</div>
<div class="t" id="d_t7" style="left:467.80px;top:520.08px;font-size:16px;line-height:16px;color:#1f1f1f;letter-spacing:0.300px;white-space:nowrap;">[Attribute(Contract.ContractorCompany.Offices.Addre</div>
</div>
<svg class="i" style="left:846px;top:356px;z-index:6;" width="11" height="8" viewBox="0 0 11 8"><path d="M1 7H10L5.5 1Z" fill="#8c8c8c"/></svg>
<div class="b" style="left:846px;top:370px;width:10.5px;height:111px;background:#8c8c8c;border-radius:5px;z-index:6;"></div>
<svg class="i" style="left:846px;top:878px;z-index:6;" width="11" height="8" viewBox="0 0 11 8"><path d="M1 1H10L5.5 7Z" fill="#8c8c8c"/></svg>
<svg class="i" style="left:133px;top:895px;z-index:6;" width="9" height="11" viewBox="0 0 9 11"><path d="M8 1V10L1 5.5Z" fill="#8c8c8c"/></svg>
<div class="b" style="left:147.5px;top:895px;width:512.5px;height:10.3px;background:#8c8c8c;border-radius:5px;z-index:6;"></div>
<svg class="i" style="left:828px;top:895px;z-index:6;" width="9" height="11" viewBox="0 0 9 11"><path d="M1 1V10L8 5.5Z" fill="#8c8c8c"/></svg>
<div class="b" style="left:866px;top:209px;width:649px;height:700.5px;overflow:hidden;background:#fdfdfd;z-index:6;">
<div class="b" style="left:0px;top:10px;width:649px;height:1px;background:#d3d3d3;"></div>
<div class="b" style="left:648px;top:10px;width:1px;height:700px;background:#dcdcdc;"></div>
<svg class="i" style="left:0px;top:15px;" width="648" height="7" viewBox="0 0 648 7"><rect x="0" y="0" width="648" height="7" fill="#3d8faa"/><path d="M508 7L542 0H648V7Z" fill="#404a4f"/></svg>
<div class="t" id="p_l_desc" style="left:51.50px;top:40.99px;font-size:10.5px;line-height:10.5px;color:#151515;font-weight:700;font-family:'Liberation Serif', serif;letter-spacing:0.230px;white-space:nowrap;">Description</div>
<div class="t" id="p_v_desc" style="left:51.50px;top:53.38px;font-size:14px;line-height:14px;color:#151515;font-family:'Liberation Serif', serif;letter-spacing:-0.269px;white-space:nowrap;">USD Contract 1</div>
<div class="t" id="p_l_num" style="left:51.50px;top:76.69px;font-size:10.5px;line-height:10.5px;color:#151515;font-weight:700;font-family:'Liberation Serif', serif;white-space:nowrap;">Number</div>
<div class="t" id="p_v_num" style="left:51.50px;top:88.88px;font-size:14px;line-height:14px;color:#151515;font-family:'Liberation Serif', serif;white-space:nowrap;">001</div>
<div class="t" id="p_l_stat" style="left:51.50px;top:112.78px;font-size:10.5px;line-height:10.5px;color:#151515;font-weight:700;font-family:'Liberation Serif', serif;white-space:nowrap;">Status</div>
<div class="t" id="p_v_stat" style="left:51.50px;top:124.88px;font-size:14px;line-height:14px;color:#151515;font-family:'Liberation Serif', serif;letter-spacing:-0.243px;white-space:nowrap;">Approved</div>
<div class="t" id="p_l_from" style="left:51.50px;top:148.59px;font-size:10.5px;line-height:10.5px;color:#151515;font-weight:700;font-family:'Liberation Serif', serif;white-space:nowrap;">From</div>
<div class="t" id="p_c1" style="left:61.90px;top:192.31px;font-size:13px;line-height:13px;color:#151515;font-family:'Liberation Serif', serif;white-space:nowrap;">,</div>
<div class="t" id="p_attn1" style="left:61.90px;top:208.38px;font-size:14px;line-height:14px;color:#151515;font-family:'Liberation Serif', serif;letter-spacing:-0.225px;white-space:nowrap;">Attn:</div>
<div class="t" id="p_l_wrr" style="left:51.50px;top:231.99px;font-size:10.5px;line-height:10.5px;color:#151515;font-weight:700;font-family:'Liberation Serif', serif;letter-spacing:0.361px;white-space:nowrap;">Work Retainage Rate</div>
<div class="t" id="p_l_od" style="left:369.00px;top:76.69px;font-size:10.5px;line-height:10.5px;color:#151515;font-weight:700;font-family:'Liberation Serif', serif;letter-spacing:0.325px;white-space:nowrap;">Official Date</div>
<div class="t" id="p_l_ct" style="left:369.00px;top:112.78px;font-size:10.5px;line-height:10.5px;color:#151515;font-weight:700;font-family:'Liberation Serif', serif;letter-spacing:0.383px;white-space:nowrap;">Contract Type</div>
<div class="t" id="p_l_to" style="left:369.00px;top:148.59px;font-size:10.5px;line-height:10.5px;color:#151515;font-weight:700;font-family:'Liberation Serif', serif;white-space:nowrap;">To</div>
<div class="t" id="p_c2" style="left:382.00px;top:192.31px;font-size:13px;line-height:13px;color:#151515;font-family:'Liberation Serif', serif;white-space:nowrap;">,</div>
<div class="t" id="p_attn2" style="left:381.80px;top:208.38px;font-size:14px;line-height:14px;color:#151515;font-family:'Liberation Serif', serif;letter-spacing:-0.225px;white-space:nowrap;">Attn:</div>
<div class="t" id="p_l_smr" style="left:369.00px;top:231.99px;font-size:10.5px;line-height:10.5px;color:#151515;font-weight:700;font-family:'Liberation Serif', serif;letter-spacing:0.338px;white-space:nowrap;">Stored Material Retainage Rate</div>
<div class="t" id="p_l_sow" style="left:51.50px;top:275.99px;font-size:10.5px;line-height:10.5px;color:#151515;font-weight:700;font-family:'Liberation Serif', serif;letter-spacing:0.342px;white-space:nowrap;">Scope of Work</div>
<div class="t" id="p_l_gp" style="left:51.50px;top:320.18px;font-size:10.5px;line-height:10.5px;color:#151515;font-weight:700;font-family:'Liberation Serif', serif;letter-spacing:0.318px;white-space:nowrap;">General Provisions</div>
<div class="t" id="p_items" style="left:51.50px;top:386.78px;font-size:14px;line-height:14px;color:#151515;font-weight:700;font-family:'Liberation Serif', serif;letter-spacing:0.475px;white-space:nowrap;">Items</div>
<div class="t" id="p_no" style="left:51.50px;top:412.47px;font-size:11px;line-height:11px;color:#151515;font-weight:700;font-family:'Liberation Serif', serif;letter-spacing:0.300px;white-space:nowrap;">NO</div>
<div class="t" id="p_descr" style="left:97.00px;top:412.47px;font-size:11px;line-height:11px;color:#151515;font-weight:700;font-family:'Liberation Serif', serif;letter-spacing:0.100px;white-space:nowrap;">DESCRIPTION</div>
<div class="t" id="p_ac" style="left:405.30px;top:412.17px;font-size:11px;line-height:11px;color:#151515;font-weight:700;font-family:'Liberation Serif', serif;letter-spacing:0.117px;white-space:nowrap;">ACTIVITY CODE</div>
<div class="b" style="left:0px;top:428px;width:648px;height:1.3px;background:#333;"></div>
<div class="b" style="left:0px;top:462px;width:648px;height:1.3px;background:#999;"></div>
<div class="b" style="left:0px;top:495px;width:648px;height:1.3px;background:#555;"></div>
<div class="b" style="left:0px;top:529px;width:648px;height:1.3px;background:#333;"></div>
<div class="b" style="left:0px;top:562px;width:648px;height:1.3px;background:#999;"></div>
<div class="b" style="left:0px;top:596px;width:648px;height:1.3px;background:#444;"></div>
<div class="t" id="p_r0" style="left:51.50px;top:431.28px;font-size:10.5px;line-height:10.5px;color:#151515;font-family:'Liberation Serif', serif;white-space:nowrap;">01</div>
<div class="t" id="p_r1" style="left:51.50px;top:465.09px;font-size:10.5px;line-height:10.5px;color:#151515;font-family:'Liberation Serif', serif;white-space:nowrap;">02</div>
<div class="t" id="p_r2" style="left:51.50px;top:498.09px;font-size:10.5px;line-height:10.5px;color:#151515;font-family:'Liberation Serif', serif;white-space:nowrap;">03</div>
<div class="t" id="p_r3" style="left:51.50px;top:531.59px;font-size:10.5px;line-height:10.5px;color:#151515;font-family:'Liberation Serif', serif;white-space:nowrap;">04</div>
<div class="t" id="p_r4" style="left:51.50px;top:565.09px;font-size:10.5px;line-height:10.5px;color:#151515;font-family:'Liberation Serif', serif;white-space:nowrap;">05</div>
<div class="b" style="left:0px;top:603px;width:648px;height:36px;background:#d6dcdb;"></div>
<div class="t" id="p_total" style="left:544.80px;top:605.31px;font-size:13px;line-height:13px;color:#151515;font-weight:700;font-family:'Liberation Serif', serif;letter-spacing:0.650px;white-space:nowrap;">Total</div>
<div class="t" id="p_dates" style="left:52.10px;top:659.58px;font-size:14px;line-height:14px;color:#151515;font-weight:700;font-family:'Liberation Serif', serif;letter-spacing:0.575px;white-space:nowrap;">Dates</div>
<div class="t" id="p_sd" style="left:51.30px;top:684.49px;font-size:10.5px;line-height:10.5px;color:#151515;font-weight:700;font-family:'Liberation Serif', serif;letter-spacing:0.322px;white-space:nowrap;">Start Date</div>
<div class="t" id="p_ed" style="left:297.00px;top:684.49px;font-size:10.5px;line-height:10.5px;color:#151515;font-weight:700;font-family:'Liberation Serif', serif;letter-spacing:0.429px;white-space:nowrap;">End Date</div>
<div class="t" id="p_crb" style="left:520.20px;top:684.09px;font-size:10.5px;line-height:10.5px;color:#151515;font-weight:700;font-family:'Liberation Serif', serif;letter-spacing:0.305px;white-space:nowrap;">Contract Required By</div>
<div class="b" style="left:17px;top:694px;width:509px;height:2px;background:#8f8f8f;border-radius:1px;"></div>
<div class="b" style="left:643px;top:79px;width:2px;height:446px;background:#858585;"></div>
<svg class="i" style="left:153px;top:9px;" width="150" height="6" viewBox="0 0 150 6"><path d="M5.5 0.5C5 3 3 3.5 1 3.2M50.5 0.5L51.5 3M145.5 0.5L143 3" fill="none" stroke="#333" stroke-width="1.2"/></svg>
</div>
<div class="b" style="left:126px;top:915.5px;width:1389px;height:1px;background:#ececec;z-index:6;"></div>
<div class="b" style="left:133px;top:923px;width:113px;height:45px;background:#676c71;border-radius:3px;z-index:6;"></div>
<div class="t" id="f_save" style="left:172.20px;top:937.33px;font-size:15px;line-height:15px;color:#fff;font-weight:700;letter-spacing:-0.333px;z-index:6;">Save</div>
<div class="b" style="left:258px;top:923px;width:170px;height:45px;background:#676c71;border-radius:3px;z-index:6;"></div>
<div class="t" id="f_imp" style="left:283.50px;top:937.33px;font-size:15px;line-height:15px;color:#fff;font-weight:700;letter-spacing:0.250px;z-index:6;">Import Template</div>
<div class="b" style="left:440px;top:923px;width:170px;height:45px;background:#676c71;border-radius:3px;z-index:6;"></div>
<div class="t" id="f_exp" style="left:466.00px;top:937.33px;font-size:15px;line-height:15px;color:#fff;font-weight:700;letter-spacing:0.079px;z-index:6;">Export Template</div>
<div class="b" style="left:622px;top:923px;width:113px;height:45px;background:#676c71;border-radius:3px;z-index:6;"></div>
<div class="t" id="f_close" style="left:658.30px;top:937.33px;font-size:15px;line-height:15px;color:#fff;font-weight:700;letter-spacing:-0.325px;z-index:6;">Close</div>
<svg class="i" style="left:862px;top:518.5px;z-index:9;" width="32" height="48" viewBox="0 0 32 48"><path d="M2.3 2.3V38.3L10.3 30.8L15.8 42.8L20.8 40.8L15.8 28.3H27.8Z" fill="#fff" stroke="#111" stroke-width="1.4" stroke-linejoin="round"/></svg>
</body></html>
